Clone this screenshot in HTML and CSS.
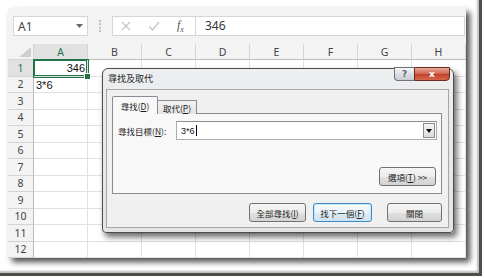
FILE: index.html
```html
<!DOCTYPE html>
<html lang="zh-Hant">
<head>
    <meta charset="UTF-8">
    <meta name="viewport" content="width=device-width, initial-scale=1.0">
    <title>尋找及取代</title>
    <link rel="stylesheet" href="styles.css">
</head>
<body>

<div class="frame">
    <div class="shot">

        <!-- formula bar -->
        <div class="fbar">
            <div class="namebox">
                <span>A1</span>
                <svg class="nb-arrow" width="7" height="4" viewBox="0 0 7 4"><path d="M0 0h7L3.5 4z" fill="#666"/></svg>
            </div>
            <div class="grip"></div>
            <div class="fx-tools">
                <svg width="10" height="10" viewBox="0 0 10 10"><path d="M1 1l8 8M9 1l-8 8" stroke="#c4c4c4" stroke-width="1.2"/></svg>
                <svg width="12" height="10" viewBox="0 0 12 10"><path d="M1 5.5l3.5 3.5L11 1" stroke="#c4c4c4" stroke-width="1.2" fill="none"/></svg>
                <span class="fx">f<sub>x</sub></span>
            </div>
            <div class="formula">346</div>
        </div>

        <!-- sheet grid -->
        <div class="sheet">
            <div class="corner"><svg width="12" height="10" viewBox="0 0 12 10"><path d="M12 0v10H0z" fill="#cfcfcf"/></svg></div>
            <div class="ch sel">A</div><div class="ch">B</div><div class="ch">C</div><div class="ch">D</div><div class="ch">E</div><div class="ch">F</div><div class="ch">G</div><div class="ch">H</div>

            <div class="rh sel">1</div><div class="c active num">346</div><div class="c"></div><div class="c"></div><div class="c"></div><div class="c"></div><div class="c"></div><div class="c"></div><div class="c"></div>
            <div class="rh">2</div><div class="c">3*6</div><div class="c"></div><div class="c"></div><div class="c"></div><div class="c"></div><div class="c"></div><div class="c"></div><div class="c"></div>
            <div class="rh">3</div><div class="c"></div><div class="c"></div><div class="c"></div><div class="c"></div><div class="c"></div><div class="c"></div><div class="c"></div><div class="c"></div>
            <div class="rh">4</div><div class="c"></div><div class="c"></div><div class="c"></div><div class="c"></div><div class="c"></div><div class="c"></div><div class="c"></div><div class="c"></div>
            <div class="rh">5</div><div class="c"></div><div class="c"></div><div class="c"></div><div class="c"></div><div class="c"></div><div class="c"></div><div class="c"></div><div class="c"></div>
            <div class="rh">6</div><div class="c"></div><div class="c"></div><div class="c"></div><div class="c"></div><div class="c"></div><div class="c"></div><div class="c"></div><div class="c"></div>
            <div class="rh">7</div><div class="c"></div><div class="c"></div><div class="c"></div><div class="c"></div><div class="c"></div><div class="c"></div><div class="c"></div><div class="c"></div>
            <div class="rh">8</div><div class="c"></div><div class="c"></div><div class="c"></div><div class="c"></div><div class="c"></div><div class="c"></div><div class="c"></div><div class="c"></div>
            <div class="rh">9</div><div class="c"></div><div class="c"></div><div class="c"></div><div class="c"></div><div class="c"></div><div class="c"></div><div class="c"></div><div class="c"></div>
            <div class="rh">10</div><div class="c"></div><div class="c"></div><div class="c"></div><div class="c"></div><div class="c"></div><div class="c"></div><div class="c"></div><div class="c"></div>
            <div class="rh">11</div><div class="c"></div><div class="c"></div><div class="c"></div><div class="c"></div><div class="c"></div><div class="c"></div><div class="c"></div><div class="c"></div>
            <div class="rh">12</div><div class="c"></div><div class="c"></div><div class="c"></div><div class="c"></div><div class="c"></div><div class="c"></div><div class="c"></div><div class="c"></div>
        </div>

        <!-- find & replace dialog -->
        <div class="dialog">
            <div class="dlg-title">尋找及取代</div>
            <div class="caption-btns">
                <div class="cap-help">?</div>
                <div class="cap-close">x</div>
            </div>

            <div class="client">
                <div class="tabs">
                    <div class="tab active">尋找(<u>D</u>)</div>
                    <div class="tab">取代(<u>P</u>)</div>
                </div>
                <div class="panel">
                    <div class="field">
                        <span class="label">尋找目標(<u>N</u>):</span>
                        <div class="combo">
                            <span class="combo-text">3*6</span><span class="caret"></span>
                            <div class="combo-btn"><svg width="6" height="4" viewBox="0 0 6 4"><path d="M0 0h6L3 4z" fill="#111"/></svg></div>
                        </div>
                    </div>
                    <div class="opt-row">
                        <div class="btn opt">選項(<u>T</u>) &gt;&gt;</div>
                    </div>
                </div>
                <div class="actions">
                    <div class="btn find-all">全部尋找(<u>I</u>)</div>
                    <div class="btn find-next focus">找下一個(<u>F</u>)</div>
                    <div class="btn close">關閉</div>
                </div>
            </div>
        </div>

    </div>
</div>

</body>
</html>
```

FILE: styles.css
```css
* {
    box-sizing: border-box;
}

body {
    margin: 0;
    width: 484px;
    height: 278px;
    overflow: hidden;
    background: #fff;
    font-family: "Noto Sans", sans-serif;
}

/* outer picture frame with drop shadow */
.frame {
    width: 482px;
    height: 276px;
    padding: 8px 0 0 8px;
    border-right: 3px solid #4f4f49;
    border-bottom: 3px solid #4f4f49;
    box-shadow: inset -2px -2px 2px rgba(0, 0, 0, 0.25);
}

.shot {
    position: relative;
    width: 458px;
    height: 250px;
    background: #fff;
    box-shadow: 4px 4px 6px rgba(0, 0, 0, 0.7);
}

/* formula bar */
.fbar {
    height: 36px;
    display: flex;
    align-items: flex-start;
    padding: 8px 1px 0 5px;
    background: #f3f3f3;
}

.namebox {
    width: 75px;
    height: 20px;
    display: flex;
    align-items: center;
    justify-content: space-between;
    padding: 0 4px 0 4px;
    background: #fff;
    border: 1px solid #d6d6d6;
    font-size: 12px;
    color: #444;
}

.grip {
    width: 2px;
    height: 12px;
    margin: 4px 11px 0 11px;
    border-left: 2px dotted #c2c2c2;
}

.fx-tools {
    width: 84px;
    height: 20px;
    display: flex;
    align-items: center;
    padding-left: 8px;
    gap: 17px;
    background: #fff;
    border: 1px solid #d6d6d6;
}

.fx {
    font-family: "Liberation Serif", serif;
    font-style: italic;
    font-size: 12px;
    color: #555;
}

.fx sub {
    font-size: 8px;
}

.formula {
    flex: 1;
    height: 20px;
    padding-left: 9px;
    line-height: 18px;
    background: #fff;
    border: 1px solid #d6d6d6;
    border-left: none;
    font-size: 12px;
    color: #333;
}

/* worksheet */
.sheet {
    display: grid;
    grid-template-columns: 26px repeat(8, 54px);
    grid-template-rows: 16px repeat(12, 16.5px);
}

.corner,
.ch,
.rh {
    background: #f3f3f3;
    border-right: 1px solid #d4d4d4;
    border-bottom: 1px solid #d4d4d4;
    color: #444;
    font-size: 10.5px;
    display: flex;
    align-items: center;
    justify-content: center;
}

.corner {
    align-items: flex-end;
    justify-content: flex-end;
    padding: 0 2px 2px 0;
}

.ch {
    border-bottom-color: #bcbcbc;
}

.rh {
    border-right-color: #bcbcbc;
}

.ch.sel,
.rh.sel {
    background: #e1e1e1;
    color: #217346;
}

.c {
    border-right: 1px solid #e1e1e1;
    border-bottom: 1px solid #e1e1e1;
    font-family: "Liberation Sans", sans-serif;
    font-size: 11px;
    color: #111;
    line-height: 16px;
    padding: 0 2px;
    white-space: nowrap;
}

.c.num {
    text-align: right;
}

.c.active {
    position: relative;
    z-index: 1;
    box-shadow: 0 0 0 1px #217346, inset 0 0 0 1px #217346;
}

.c.active::after {
    content: "";
    position: absolute;
    right: -4px;
    bottom: -4px;
    width: 5px;
    height: 5px;
    background: #217346;
    border: 1px solid #fff;
}

/* dialog */
.dialog {
    position: absolute;
    left: 94px;
    top: 60px;
    z-index: 5;
    width: 352px;
    height: 165px;
    display: flex;
    flex-direction: column;
    padding: 0 4px 4px 3px;
    border: 1px solid #4c4c4c;
    border-radius: 6px 6px 4px 4px;
    background: linear-gradient(#eceef0, #e2e4e6);
    box-shadow: 3px 4px 6px rgba(0, 0, 0, 0.6);
    font-family: "Noto Sans CJK TC", sans-serif;
    color: #1e1e1e;
}

.dialog u {
    text-decoration: underline;
}

.dlg-title {
    height: 20px;
    line-height: 20px;
    padding-left: 2px;
    font-size: 9px;
}

.caption-btns {
    position: absolute;
    top: -2px;
    right: 3px;
    display: flex;
    height: 14px;
}

.cap-help,
.cap-close {
    display: flex;
    align-items: center;
    justify-content: center;
    font-family: "DejaVu Sans", sans-serif;
    font-weight: bold;
    font-size: 9px;
}

.cap-help {
    width: 20px;
    border: 1px solid #6d737a;
    border-right: none;
    border-radius: 0 0 0 4px;
    background: linear-gradient(#f4f5f7, #d8dce1 55%, #c8cdd3);
    color: #5d6570;
}

.cap-close {
    width: 36px;
    border: 1px solid #6a2b20;
    border-radius: 0 0 4px 0;
    background: linear-gradient(#e9a99a, #d4674f 48%, #c1422a 52%, #d7684d);
    color: #fff;
}

.client {
    flex: 1;
    display: flex;
    flex-direction: column;
    padding: 6px 6px 0 5px;
    background: #f0f0f0;
    border: 1px solid #a3a7ab;
}

.tabs {
    display: flex;
    align-items: flex-end;
    height: 18px;
    margin-bottom: -1px;
    position: relative;
    z-index: 1;
}

.tab {
    height: 14px;
    width: 39px;
    display: flex;
    align-items: center;
    justify-content: center;
    font-size: 8.5px;
    border: 1px solid #898c95;
    border-bottom: none;
    border-left: none;
    background: linear-gradient(#f2f2f2, #e3e3e3);
}

.tab.active {
    height: 18px;
    width: 46px;
    border-left: 1px solid #898c95;
    background: #f8f8f8;
    border-radius: 2px 2px 0 0;
}

.panel {
    height: 81px;
    padding: 7px 4px 0 5px;
    background: #f8f8f8;
    border: 1px solid #898c95;
}

.field {
    display: flex;
    align-items: center;
}

.label {
    width: 58px;
    font-size: 8.5px;
}

.combo {
    flex: 1;
    height: 19px;
    display: flex;
    align-items: center;
    padding: 0 1px 0 4px;
    background: #fff;
    border: 1px solid #a9abb1;
    border-top-color: #8c8f96;
}

.combo-text {
    font-family: "Liberation Sans", sans-serif;
    font-size: 9px;
    color: #111;
}

.caret {
    width: 1px;
    height: 11px;
    margin-left: 1px;
    background: #000;
}

.combo-btn {
    width: 12px;
    height: 15px;
    margin-left: auto;
    display: flex;
    align-items: center;
    justify-content: center;
    border: 1px solid #8d8d8d;
    background: linear-gradient(#f6f6f6, #dcdcdc);
}

.opt-row {
    display: flex;
    justify-content: flex-end;
    margin-top: 27px;
    padding-right: 1px;
}

.btn {
    height: 19px;
    display: flex;
    align-items: center;
    justify-content: center;
    font-size: 8.5px;
    border: 1px solid #717171;
    border-radius: 3px;
    background: linear-gradient(#f6f6f6, #ececec 50%, #e0e0e0 51%, #d3d3d3);
}

.btn.opt {
    width: 57px;
}

.actions {
    display: flex;
    justify-content: flex-end;
    margin-top: 9px;
}

.find-all {
    width: 57px;
}

.find-next {
    width: 59px;
    margin-left: 7px;
}

.btn.focus {
    border-color: #3c8bc4;
    box-shadow: inset 0 0 0 1px #c6e6f8;
    background: linear-gradient(#f6fafd, #e9f3fa 50%, #dcebf5 51%, #d0e3f0);
}

.btn.close {
    width: 55px;
    margin-left: 15px;
}
```
